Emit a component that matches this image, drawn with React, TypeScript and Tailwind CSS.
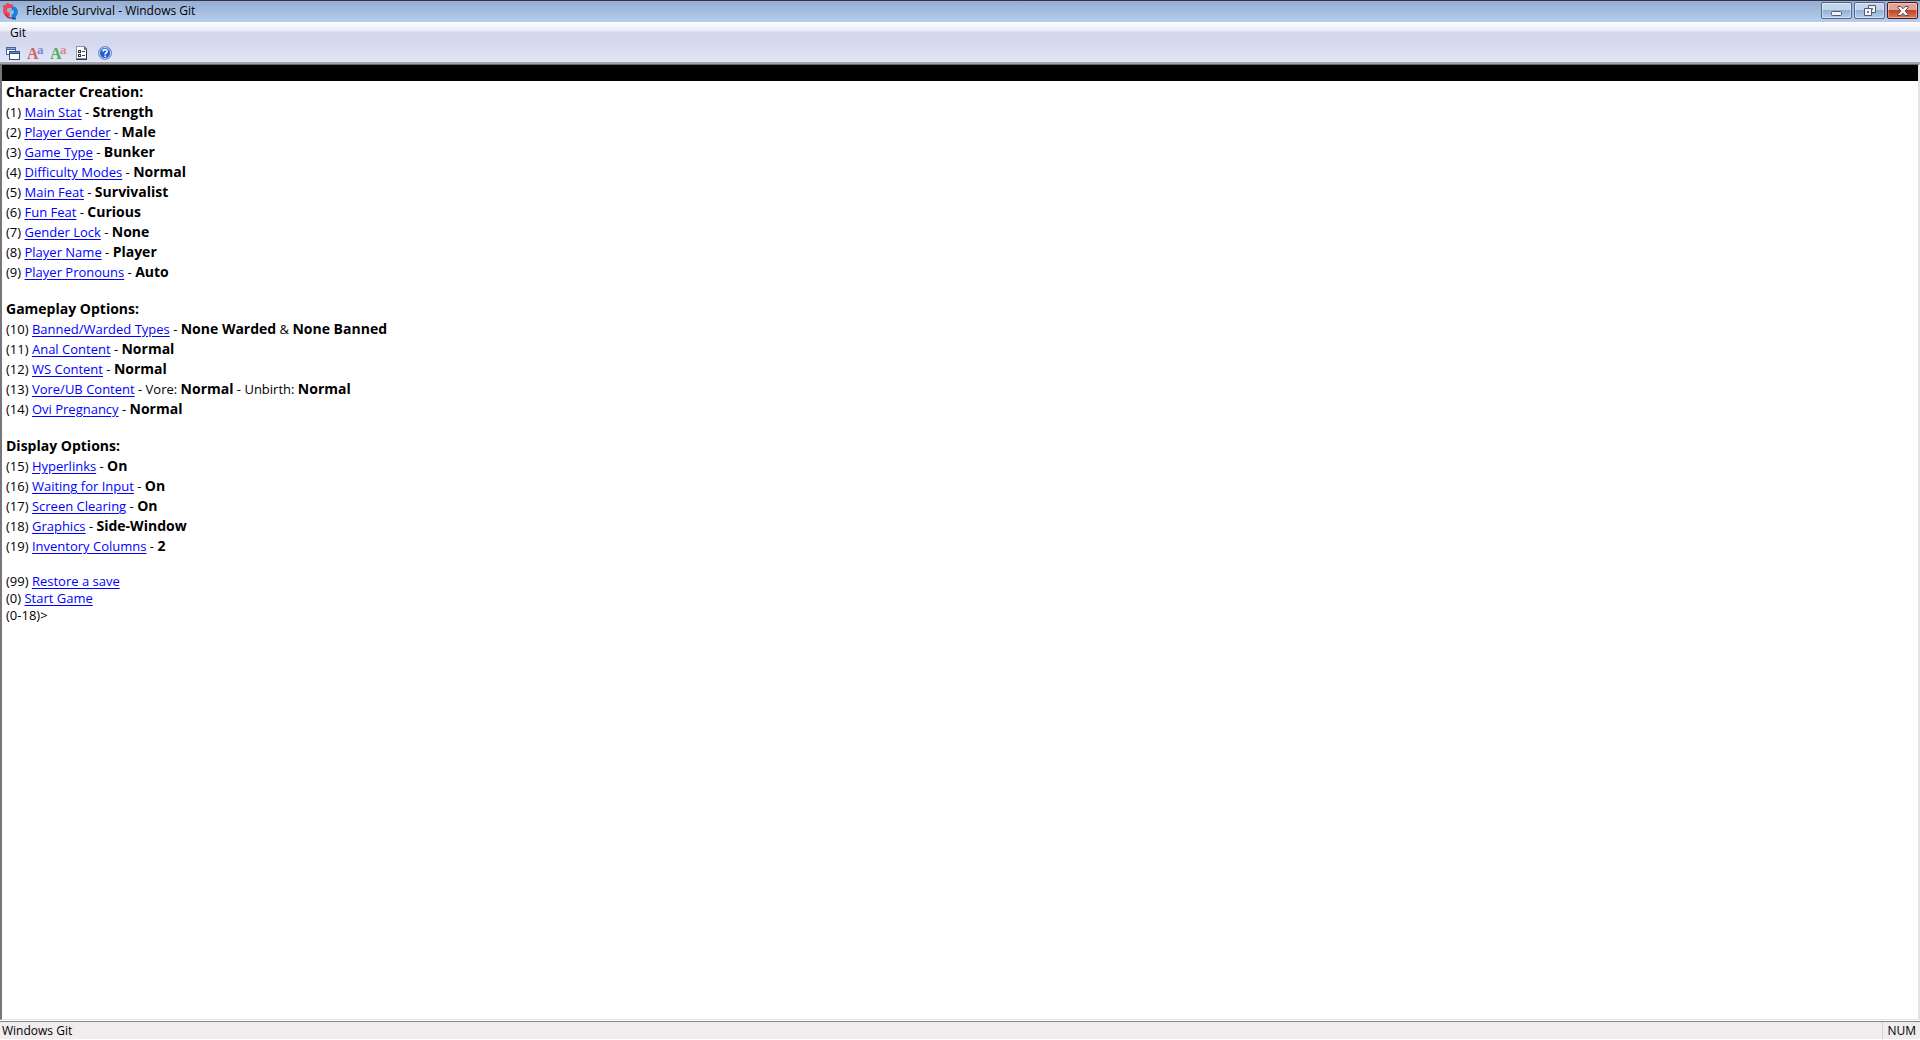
import React from "react";

type Option = {
  id: number;
  label: string;
  value: React.ReactNode;
};

const B = ({ children }: { children: React.ReactNode }) => (
  <b className="text-sm leading-none font-bold text-black">{children}</b>
);

const sections: { title: string; options: Option[] }[] = [
  {
    title: "Character Creation:",
    options: [
      { id: 1, label: "Main Stat", value: <B>Strength</B> },
      { id: 2, label: "Player Gender", value: <B>Male</B> },
      { id: 3, label: "Game Type", value: <B>Bunker</B> },
      { id: 4, label: "Difficulty Modes", value: <B>Normal</B> },
      { id: 5, label: "Main Feat", value: <B>Survivalist</B> },
      { id: 6, label: "Fun Feat", value: <B>Curious</B> },
      { id: 7, label: "Gender Lock", value: <B>None</B> },
      { id: 8, label: "Player Name", value: <B>Player</B> },
      { id: 9, label: "Player Pronouns", value: <B>Auto</B> },
    ],
  },
  {
    title: "Gameplay Options:",
    options: [
      {
        id: 10,
        label: "Banned/Warded Types",
        value: (
          <>
            <B>None Warded</B> &amp; <B>None Banned</B>
          </>
        ),
      },
      { id: 11, label: "Anal Content", value: <B>Normal</B> },
      { id: 12, label: "WS Content", value: <B>Normal</B> },
      {
        id: 13,
        label: "Vore/UB Content",
        value: (
          <>
            Vore: <B>Normal</B> - Unbirth: <B>Normal</B>
          </>
        ),
      },
      { id: 14, label: "Ovi Pregnancy", value: <B>Normal</B> },
    ],
  },
  {
    title: "Display Options:",
    options: [
      { id: 15, label: "Hyperlinks", value: <B>On</B> },
      { id: 16, label: "Waiting for Input", value: <B>On</B> },
      { id: 17, label: "Screen Clearing", value: <B>On</B> },
      { id: 18, label: "Graphics", value: <B>Side-Window</B> },
      { id: 19, label: "Inventory Columns", value: <B>2</B> },
    ],
  },
];

const GameLink = ({ children }: { children: React.ReactNode }) => (
  <a href="#" className="text-[#0000ff] underline underline-offset-2">
    {children}
  </a>
);

const AppIcon = () => (
  <svg width="16" height="17" viewBox="0 0 16 17" fill="none">
    <path d="M1 3.500h4M4 1.500h3" stroke="#d93b4c" strokeWidth="2" />
    <path d="M10.500 3.500C6 2 3 4 3 7.500c0 3 2 4 5 4" stroke="#ee4454" strokeWidth="4" />
    <path d="M3.500 11c1 2.500 3 4 6 4" stroke="#d02a3e" strokeWidth="2" />
    <path d="M10 5c3.500.5 4.500 3 3.500 5.500-.6 1.800-2 3-4 3" stroke="#1c7fd6" strokeWidth="4" />
    <path d="M6.500 8.500c1-1.500 3.500-1.500 3.500.5" stroke="#6db8f0" strokeWidth="2" />
    <path d="M10 15.500h4" stroke="#15559c" strokeWidth="2" />
  </svg>
);

const WindowsIcon = () => (
  <svg width="14" height="13" viewBox="0 0 14 13" shapeRendering="crispEdges">
    <path d="M0 0h10v8H0z" fill="#4a6398" />
    <path d="M1 3h8v4H1z" fill="#fff" />
    <path d="M1 1h8v1H1z" fill="#8fa9dc" />
    <path d="M3 4h11v9H3z" fill="#30528f" />
    <path d="M4 7h9v5H4z" fill="#fff" />
    <path d="M4 5h9v1H4z" fill="#5f8ad6" />
  </svg>
);

const FontIcon = ({ big, small }: { big: string; small: string }) => (
  <svg
    width="17"
    height="14"
    viewBox="0 0 17 14"
    className="overflow-visible font-['Liberation_Serif',serif] font-bold"
  >
    <text x="0" y="13" fontSize="16" className={big}>
      A
    </text>
    <text x="10" y="8" fontSize="13" className={small}>
      a
    </text>
  </svg>
);

const OptionsIcon = () => (
  <svg width="12" height="14" viewBox="0 0 12 14" shapeRendering="crispEdges">
    <path d="M0 0h8l3 3v11H0z" fill="#8a94a8" />
    <path d="M1 1h7v3h2v8H1z" fill="#fff" />
    <path d="M8 0l3 3v1H8z" fill="#6a7690" />
    <path d="M10 4h1v10H0v-1h10z" fill="#2b3345" />
    <path d="M2 4h3v3H2zM2 8h3v3H2z" fill="#333" />
    <path d="M3 5h1v1H3zM3 9h1v1H3z" fill="#fff" />
    <path d="M6 5h3v1H6zM6 9h3v1H6z" fill="#444" />
  </svg>
);

const HelpIcon = () => (
  <svg width="14" height="14" viewBox="0 0 14 14" fill="none">
    <circle cx="7" cy="7" r="6.500" fill="#1d5fd0" stroke="#8795b8" />
    <circle cx="7" cy="7" r="5.500" stroke="#c5d6f8" />
    <path d="M5 5.500C5 3 9.300 3 9.200 5.400 9 7 7.200 6.600 7.200 8.400" stroke="#fff" strokeWidth="1.600" />
    <path d="M6.400 9.500H8V11H6.400z" fill="#fff" />
  </svg>
);

const captionStyles: string =
  "flex h-[17px] w-[31px] items-center justify-center rounded-xs border shadow-[inset_0_0_0_1px_rgba(255,255,255,0.4)]";

const blueCaption: string =
  "border-[#53678f] bg-linear-to-b from-[#c3d5ec] from-45% via-[#94b1d2] via-50% to-[#b4d0ec]";

const TitleBar = () => (
  <header className="flex h-[22px] items-start justify-between border-t border-[#39343f] bg-linear-to-b from-[#94aed4] to-[#b6cdeb] pr-[2px] pl-[2px]">
    <div className="flex items-center gap-2">
      <AppIcon />
      <h1 className="text-xs leading-5 text-black">Flexible Survival - Windows Git</h1>
    </div>
    <div className="flex gap-[2px] pt-px">
      <button type="button" aria-label="Minimize" className={`${captionStyles} ${blueCaption}`}>
        <svg width="12" height="13" viewBox="0 0 12 13">
          <rect x=".5" y="7.500" width="10" height="4" rx="1" fill="#f4f4f4" stroke="#545b70" />
        </svg>
      </button>
      <button type="button" aria-label="Restore" className={`${captionStyles} ${blueCaption}`}>
        <svg width="12" height="12" viewBox="0 0 12 12" fillRule="evenodd">
          <path d="M4.500.5h7v7h-7zM7.500 3.500v1h1v-1z" fill="#f4f4f4" stroke="#545b70" />
          <path d="M.5 3.500h7v7h-7zM3.500 6.500v1h1v-1z" fill="#f4f4f4" stroke="#545b70" />
        </svg>
      </button>
      <button
        type="button"
        aria-label="Close"
        className={`${captionStyles} border-[#4f1620] bg-linear-to-b from-[#e2a495] from-45% via-[#c14524] via-50% to-[#d8785a]`}
      >
        <svg width="12" height="10" viewBox="0 0 12 10">
          <path
            d="M.8.5h3L6 2.700 8.200.5h3v1L8.300 5l2.900 3.500v1h-3L6 7.300 3.800 9.500h-3v-1L3.700 5 .8 1.500z"
            fill="#f7f7f7"
            stroke="#5c4452"
          />
        </svg>
      </button>
    </div>
  </header>
);

const toolStyles: string = "flex h-[18px] w-[23px] items-center justify-center";

const ToolBar = () => (
  <div className="flex items-start border-b-2 border-[#a3a3aa] bg-linear-to-b from-[#d4d9ee] to-[#e2e6f8] pl-px">
    <button type="button" aria-label="Windows" className={toolStyles}>
      <WindowsIcon />
    </button>
    <button type="button" aria-label="Text font" className={toolStyles}>
      <FontIcon big="fill-[#d0665f]" small="fill-[#8584d0]" />
    </button>
    <button type="button" aria-label="Fixed font" className={toolStyles}>
      <FontIcon big="fill-[#4fae58]" small="fill-[#dc8b84]" />
    </button>
    <button type="button" aria-label="Options" className={toolStyles}>
      <OptionsIcon />
    </button>
    <button type="button" aria-label="Help" className={toolStyles}>
      <HelpIcon />
    </button>
  </div>
);

const App = () => {
  return (
    <div className="flex min-h-screen flex-col bg-white font-['Open_Sans','Noto_Sans',sans-serif] text-black">
      <TitleBar />
      <nav className="flex items-center bg-linear-to-b from-white from-0% via-[#e8ebf7] via-40% to-[#d4d9ee] to-45% pl-[10px]">
        <button type="button" className="text-xs leading-[22px]">
          Git
        </button>
      </nav>
      <ToolBar />
      <main className="mb-px flex-1 border-t border-r-2 border-b border-l-2 border-t-[#69696d] border-r-[#e3e3e6] border-b-[#e3e3e6] border-l-[#77777b]">
        <div className="h-4 bg-black" />
        <div className="px-1 pt-px text-[13px]">
          {sections.map((section) => (
            <section key={section.title} className="mb-[17px]">
              <h2 className="text-sm leading-5 font-bold">{section.title}</h2>
              {section.options.map((option) => (
                <p key={option.id} className="leading-5">
                  ({option.id}) <GameLink>{option.label}</GameLink> - {option.value}
                </p>
              ))}
            </section>
          ))}
          <p className="leading-[17px]">
            (99) <GameLink>Restore a save</GameLink>
          </p>
          <p className="leading-[17px]">
            (0) <GameLink>Start Game</GameLink>
          </p>
          <p className="leading-[17px]">(0-18)&gt;</p>
        </div>
      </main>
      <footer className="flex items-center justify-between border-t border-b border-t-[#858589] border-b-white bg-[#f1edee] text-xs leading-[17px]">
        <span className="pl-[2px]">Windows Git</span>
        <span className="border-l border-[#d5d2d3] px-1">NUM</span>
      </footer>
    </div>
  );
};

export default App;
